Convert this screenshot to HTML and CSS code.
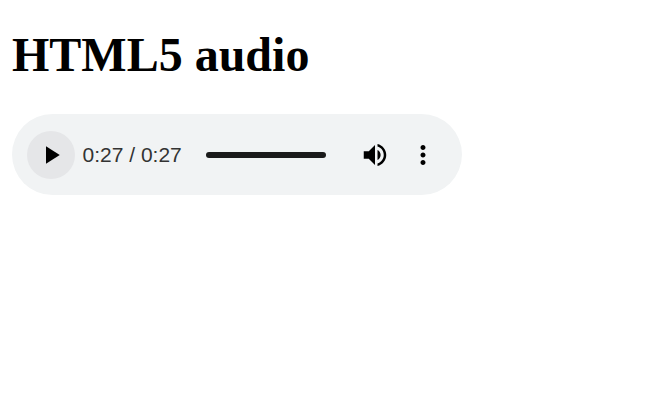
FILE: index.html
```html
<!DOCTYPE html>
<html lang="en">
<head>
<meta charset="utf-8">
<title>HTML5 audio</title>
<link rel="stylesheet" href="styles.css">
</head>
<body>
<h1>HTML5 audio</h1>
<div class="player">
  <button class="control play" aria-label="Play"><svg viewBox="0 0 24 24"><path d="M8 5v14l11-7z"/></svg></button>
  <div class="time">0:27 / 0:27</div>
  <div class="track"></div>
  <button class="control volume" aria-label="Volume"><svg viewBox="0 0 24 24"><path d="M3 9v6h4l5 5V4L7 9H3zm13.5 3c0-1.77-1.02-3.29-2.5-4.03v8.05c1.48-.73 2.5-2.25 2.5-4.02zM14 3.23v2.06c2.89.86 5 3.54 5 6.71s-2.11 5.85-5 6.71v2.06c4.01-.91 7-4.49 7-8.77s-2.99-7.86-7-8.77z"/></svg></button>
  <button class="control" aria-label="More options"><svg viewBox="0 0 24 24"><path d="M12 8c1.1 0 2-.9 2-2s-.9-2-2-2-2 .9-2 2 .9 2 2 2zm0 2c-1.1 0-2 .9-2 2s.9 2 2 2 2-.9 2-2-.9-2-2-2zm0 6c-1.1 0-2 .9-2 2s.9 2 2 2 2-.9 2-2-.9-2-2-2z"/></svg></button>
</div>
</body>
</html>
```
FILE: styles.css
```css
body {
  margin: 0;
  padding: 28px 12px;
  background: #fff;
}

h1 {
  margin: 0 0 32px;
  font: bold 48px/54px "Liberation Serif", serif;
  color: #000;
}

.player {
  display: flex;
  align-items: center;
  box-sizing: border-box;
  width: 450px;
  height: 81px;
  padding: 1px 15px 0;
  border-radius: 41px;
  background: #f1f3f4;
}

.control {
  display: flex;
  align-items: center;
  justify-content: center;
  flex: none;
  width: 48px;
  height: 48px;
  padding: 0;
  border: 0;
  border-radius: 50%;
  background: none;
}

.control svg {
  flex: none;
  width: 30px;
  height: 30px;
}

.play {
  background: #e5e6e8;
}

.time {
  flex: none;
  width: 116px;
  margin-left: 7.5px;
  font: 21px/30px "Liberation Sans", sans-serif;
  color: #333;
  white-space: nowrap;
}

.track {
  flex: none;
  width: 120px;
  height: 6px;
  margin-left: 7.5px;
  border-radius: 3px;
  background: #1a1a1a;
}

.volume {
  margin-left: 25px;
}
```
